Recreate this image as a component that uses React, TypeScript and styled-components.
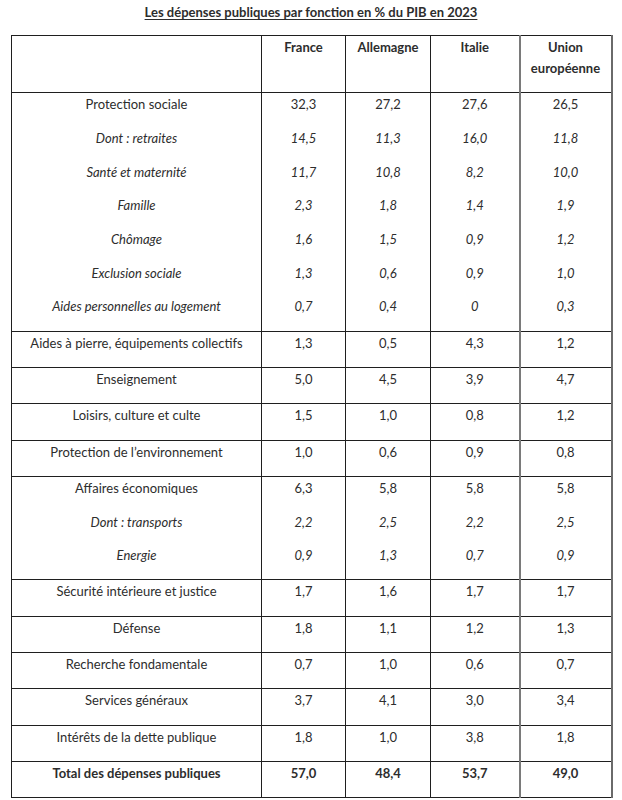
import React from "react";
import styled, { createGlobalStyle } from "styled-components";

const GlobalStyle = createGlobalStyle`
  html, body { margin: 0; padding: 0; background: #ffffff; }
  body { font-family: Lato, "Open Sans", "Liberation Sans", sans-serif; color: #2d2d2d; }
`;

const Page = styled.div`
  width: 622px;
  padding: 0 11px;
  box-sizing: border-box;
`;

const Title = styled.p`
  margin: 2px 0 12px;
  text-align: center;
  font-size: 13px;
  line-height: 21px;
  font-weight: 700;
  text-decoration: underline;
  text-underline-offset: 2px;
`;

const Table = styled.table`
  width: 600px;
  border-collapse: collapse;
  table-layout: fixed;
  border: 1px solid #2a2a2a;
`;

const Cell = styled.td<{ $union?: boolean }>`
  border: 1px solid #1f1f1f;
  ${(p) => (p.$union ? "border-left: 2px solid #7a7a7a; border-right: 2px solid #6a6a6a;" : "")}
  padding: 1px 2px 0.6px;
  vertical-align: top;
  text-align: center;
  font-size: 13px;
`;

const HeadCell = styled(Cell).attrs({ as: "th" })`
  font-weight: 700;
`;

const Line = styled.p<{ $italic?: boolean; $bold?: boolean }>`
  margin: 0 0 12.7px;
  line-height: 21px;
  font-style: ${(p) => (p.$italic ? "italic" : "normal")};
  font-weight: ${(p) => (p.$bold ? 700 : 400)};
`;

type Item = { label: string; values: string[]; italic?: boolean; bold?: boolean };

const groups: Item[][] = [
  [
    { label: "Protection sociale", values: ["32,3", "27,2", "27,6", "26,5"] },
    { label: "Dont : retraites", values: ["14,5", "11,3", "16,0", "11,8"], italic: true },
    { label: "Santé et maternité", values: ["11,7", "10,8", "8,2", "10,0"], italic: true },
    { label: "Famille", values: ["2,3", "1,8", "1,4", "1,9"], italic: true },
    { label: "Chômage", values: ["1,6", "1,5", "0,9", "1,2"], italic: true },
    { label: "Exclusion sociale", values: ["1,3", "0,6", "0,9", "1,0"], italic: true },
    { label: "Aides personnelles au logement", values: ["0,7", "0,4", "0", "0,3"], italic: true },
  ],
  [{ label: "Aides à pierre, équipements collectifs", values: ["1,3", "0,5", "4,3", "1,2"] }],
  [{ label: "Enseignement", values: ["5,0", "4,5", "3,9", "4,7"] }],
  [{ label: "Loisirs, culture et culte", values: ["1,5", "1,0", "0,8", "1,2"] }],
  [{ label: "Protection de l’environnement", values: ["1,0", "0,6", "0,9", "0,8"] }],
  [
    { label: "Affaires économiques", values: ["6,3", "5,8", "5,8", "5,8"] },
    { label: "Dont : transports", values: ["2,2", "2,5", "2,2", "2,5"], italic: true },
    { label: "Energie", values: ["0,9", "1,3", "0,7", "0,9"], italic: true },
  ],
  [{ label: "Sécurité intérieure et justice", values: ["1,7", "1,6", "1,7", "1,7"] }],
  [{ label: "Défense", values: ["1,8", "1,1", "1,2", "1,3"] }],
  [{ label: "Recherche fondamentale", values: ["0,7", "1,0", "0,6", "0,7"] }],
  [{ label: "Services généraux", values: ["3,7", "4,1", "3,0", "3,4"] }],
  [{ label: "Intérêts de la dette publique", values: ["1,8", "1,0", "3,8", "1,8"] }],
  [{ label: "Total des dépenses publiques", values: ["57,0", "48,4", "53,7", "49,0"], bold: true }],
];

const widths = [250, 84, 85, 89, 92];

export default function App() {
  return (
    <>
      <GlobalStyle />
      <Page>
        <Title>Les dépenses publiques par fonction en % du PIB en 2023</Title>
        <Table>
          <colgroup>
            {widths.map((w, i) => (
              <col key={i} style={{ width: w }} />
            ))}
          </colgroup>
          <thead>
            <tr>
              <HeadCell>
                <Line>&nbsp;</Line>
              </HeadCell>
              <HeadCell>
                <Line $bold>France</Line>
              </HeadCell>
              <HeadCell>
                <Line $bold>Allemagne</Line>
              </HeadCell>
              <HeadCell>
                <Line $bold>Italie</Line>
              </HeadCell>
              <HeadCell $union>
                <Line $bold>Union européenne</Line>
              </HeadCell>
            </tr>
          </thead>
          <tbody>
            {groups.map((g, gi) => (
              <tr key={gi}>
                <Cell>
                  {g.map((it, i) => (
                    <Line key={i} $italic={it.italic} $bold={it.bold}>
                      {it.label}
                    </Line>
                  ))}
                </Cell>
                {[0, 1, 2, 3].map((c) => (
                  <Cell key={c} $union={c === 3}>
                    {g.map((it, i) => (
                      <Line key={i} $italic={it.italic} $bold={it.bold}>
                        {it.values[c]}
                      </Line>
                    ))}
                  </Cell>
                ))}
              </tr>
            ))}
          </tbody>
        </Table>
      </Page>
    </>
  );
}
